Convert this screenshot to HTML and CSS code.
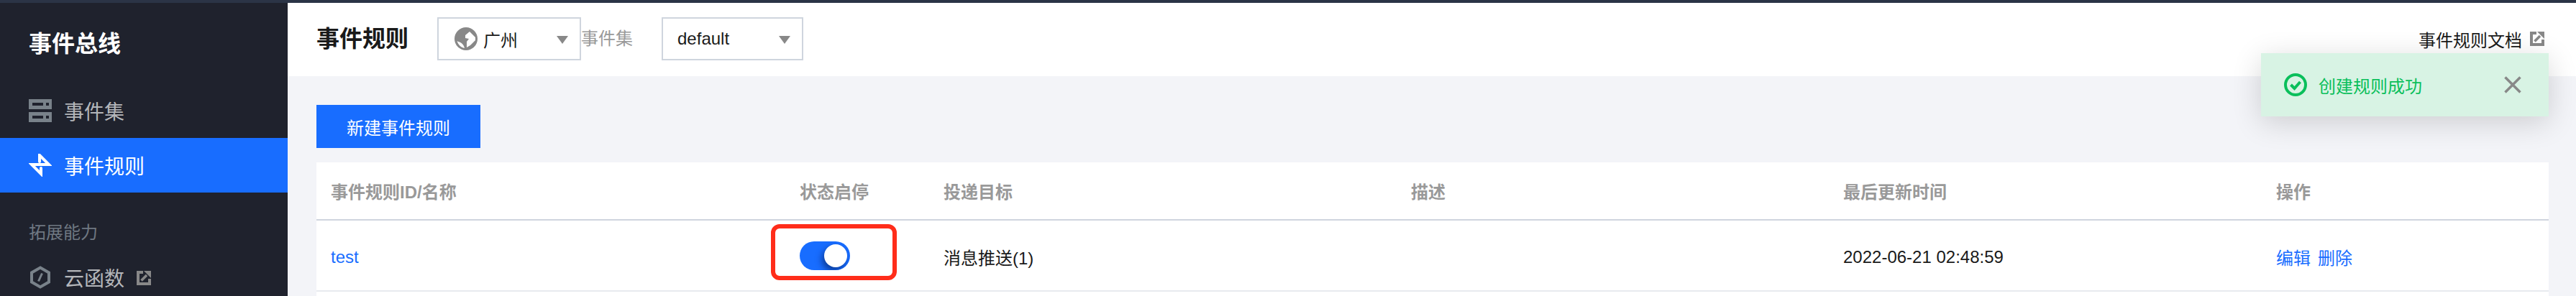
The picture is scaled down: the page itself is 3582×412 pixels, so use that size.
FILE: index.html
```html
<!DOCTYPE html>
<html lang="zh-CN">
<head>
  <meta charset="UTF-8">
  <meta name="viewport" content="width=device-width, initial-scale=1.0">
  <title>事件规则</title>
  <link rel="stylesheet" href="styles.css">
</head>
<body>

  <div class="topbar"></div>

  <div class="app">
    <!-- 侧边栏 -->
    <aside class="sidebar">
      <div class="sidebar-title">事件总线</div>
      <a class="nav-item">
        <svg class="nav-icon" viewBox="0 0 32 32"><path fill="#79828a" fill-rule="evenodd" d="M0 0h32v14H0zM0 18h32v14H0zM5 5v4h15V5zM5 23v4h15v-4zM24 5v4h4V5zM24 23v4h4v-4z"/></svg>
        <span>事件集</span>
      </a>
      <a class="nav-item active">
        <svg class="nav-icon" viewBox="0 0 32 32"><path fill="none" stroke="#fff" stroke-width="4" stroke-linecap="round" d="M15 11V2l13 13H4l13 13v-8"/></svg>
        <span>事件规则</span>
      </a>
      <div class="nav-section">拓展能力</div>
      <a class="nav-item">
        <svg class="nav-icon" viewBox="0 0 32 32"><path fill="none" stroke="#79828a" stroke-width="4" d="M16 2.500l12 7v13l-12 7-12-7v-13z"/><path fill="none" stroke="#79828a" stroke-width="3" d="M18.500 10.500l-5 11"/></svg>
        <span>云函数</span>
        <svg class="ext-icon" viewBox="0 0 20 20"><path fill="none" stroke="#888" stroke-width="4" d="M9 2H2v16h16v-7"/><path fill="none" stroke="#888" stroke-width="3.500" d="M6.500 13.500L14 6"/><path fill="#888" d="M10 0h10v10z"/></svg>
      </a>
    </aside>

    <main class="main">
      <header class="page-head">
        <h1 class="page-title">事件规则</h1>
        <div class="select select-region">
          <svg class="globe" viewBox="0 0 32 32"><circle cx="16" cy="16" r="16" fill="#888"/><path fill="#fff" d="M3.500 19c1.500 5 5 9 10.500 10-1-4-3-6-5-7.500-2-1-4-1.500-5.500-2.500zM15 11l6-5 8 8v4l-7 7-5 3v-8l3-4-5-1z"/></svg>
          <span class="select-text">广州</span>
          <i class="caret"></i>
        </div>
        <span class="filter-label">事件集</span>
        <div class="select select-set">
          <span class="select-text">default</span>
          <i class="caret"></i>
        </div>
        <a class="doc-link">
          <span>事件规则文档</span>
          <svg class="ext-icon" viewBox="0 0 20 20"><path fill="none" stroke="#888" stroke-width="4" d="M9 2H2v16h16v-7"/><path fill="none" stroke="#888" stroke-width="3.500" d="M6.500 13.500L14 6"/><path fill="#888" d="M10 0h10v10z"/></svg>
        </a>
      </header>

      <section class="content">
        <button class="btn-primary">新建事件规则</button>
        <div class="table-wrap">
          <table class="rules">
            <colgroup>
              <col class="col-name"><col class="col-status"><col class="col-target"><col class="col-desc"><col class="col-time"><col class="col-op">
            </colgroup>
            <thead>
              <tr>
                <th>事件规则ID/名称</th>
                <th>状态启停</th>
                <th>投递目标</th>
                <th>描述</th>
                <th>最后更新时间</th>
                <th>操作</th>
              </tr>
            </thead>
            <tbody>
              <tr>
                <td><a class="link">test</a></td>
                <td>
                  <div class="toggle-wrap">
                    <div class="toggle"><i class="knob"></i></div>
                    <div class="mark"></div>
                  </div>
                </td>
                <td>消息推送(1)</td>
                <td></td>
                <td>2022-06-21 02:48:59</td>
                <td class="ops"><a class="link">编辑</a><a class="link">删除</a></td>
              </tr>
            </tbody>
          </table>
        </div>
      </section>
    </main>
  </div>

  <!-- 提示 -->
  <div class="toast">
    <svg class="toast-icon" viewBox="0 0 32 32"><circle cx="16" cy="16" r="14" fill="none" stroke="#0abf5b" stroke-width="4"/><path fill="none" stroke="#0abf5b" stroke-width="4" d="M9.500 16l5 5 8-9"/></svg>
    <span class="toast-text">创建规则成功</span>
    <svg class="toast-close" viewBox="0 0 24 24"><path fill="none" stroke="#888" stroke-width="3.500" d="M1.500 1.500l21 21M22.500 1.500l-21 21"/></svg>
  </div>

</body>
</html>
```

FILE: styles.css
```css
* {
  box-sizing: border-box;
  margin: 0;
  padding: 0;
}
html, body { height: 100%; overflow: hidden; }
body {
  font-family: "Liberation Sans", "Noto Sans CJK SC", sans-serif;
  font-size: 24px;
  color: #1a1a1a;
  background: #f3f4f8;
  display: flex;
  flex-direction: column;
  position: relative;
}
.topbar { height: 4px; background: #2b3446; flex: none; }
.app { flex: 1; display: flex; min-height: 0; }

/* sidebar */
.sidebar { width: 400px; flex: none; background: #1f222d; color: #b4b6ba; }
.sidebar-title { height: 112px; line-height: 114px; padding-left: 40px; font-size: 32px; font-weight: bold; color: #fff; }
.nav-item { display: flex; align-items: center; height: 76px; padding-left: 40px; font-size: 28px; }
.nav-item.active { background: #186dff; color: #fff; }
.nav-icon { width: 32px; height: 32px; margin-right: 17px; flex: none; }
.nav-section { padding: 36px 0 4px 40px; line-height: 40px; font-size: 24px; color: #6f7882; }
.ext-icon { width: 20px; height: 20px; flex: none; }
.nav-item .ext-icon { margin-left: 17px; margin-top: 2px; }

/* header */
.main { flex: 1; min-width: 0; display: flex; flex-direction: column; }
.page-head { height: 102px; flex: none; background: #fff; display: flex; align-items: flex-start; padding: 20px 44px 0 40px; }
.page-title { font-size: 32px; line-height: 60px; margin-right: 40px; color: #1a1a1a; }
.select { height: 60px; border: 2px solid #cfd5de; display: flex; align-items: center; position: relative; background: #fff; }
.select-region { width: 200px; padding-left: 22px; }
.select-set { width: 197px; padding-left: 20px; }
.globe { width: 32px; height: 32px; margin-right: 8px; }
.select-text { color: #1a1a1a; }
.caret { position: absolute; right: 16px; top: 24px; border-left: 8px solid transparent; border-right: 8px solid transparent; border-top: 11px solid #888; }
.filter-label { line-height: 60px; color: #999; margin-right: 40px; }
.doc-link { margin-left: auto; display: flex; align-items: center; height: 60px; gap: 11px; color: #1a1a1a; }

/* content */
.content { flex: 1; min-height: 0; padding: 40px 38px 0 40px; display: flex; flex-direction: column; align-items: flex-start; }
.btn-primary { width: 228px; height: 60px; flex: none; border: none; background: #186dff; color: #fff; font: inherit; margin-bottom: 20px; }
.table-wrap { width: 100%; flex: 1; background: #fff; }
.rules { width: 100%; table-layout: fixed; border-collapse: separate; border-spacing: 0; }
.col-name { width: 652px; }
.col-status { width: 200px; }
.col-target { width: 650px; }
.col-desc { width: 601px; }
.col-time { width: 602px; }
.col-op { width: 399px; }
.rules th { height: 81px; padding-left: 20px; text-align: left; font-weight: 600; color: #999; border-bottom: 2px solid #cfd5de; }
.rules td { height: 99px; padding: 4px 0 0 20px; border-bottom: 2px solid #e7eaef; white-space: nowrap; }
.link { color: #186dff; }
.ops .link { margin-right: 10px; }

/* switch */
.toggle-wrap { position: relative; width: 70px; height: 40px; margin-top: -4px; }
.toggle { width: 70px; height: 40px; border-radius: 20px; background: #186dff; overflow: hidden; display: flex; align-items: center; justify-content: flex-end; padding-right: 4px; }
.knob { width: 32px; height: 32px; border-radius: 50%; background: #fff; box-shadow: -3px 5px 10px rgba(0, 20, 70, .55); }
.mark { position: absolute; left: -40px; right: -65px; top: -24px; bottom: -14px; border: 6px solid #ff2d1a; border-radius: 12px; }

/* toast */
.toast { position: absolute; top: 74px; right: 38px; width: 400px; height: 88px; background: #d8f3e4; display: flex; align-items: center; padding-left: 32px; box-shadow: 0 8px 40px rgba(0, 0, 0, .16); }
.toast-icon { width: 32px; height: 32px; margin-right: 16px; }
.toast-text { color: #0abf5b; }
.toast-close { width: 24px; height: 24px; margin-left: 114px; }
```
